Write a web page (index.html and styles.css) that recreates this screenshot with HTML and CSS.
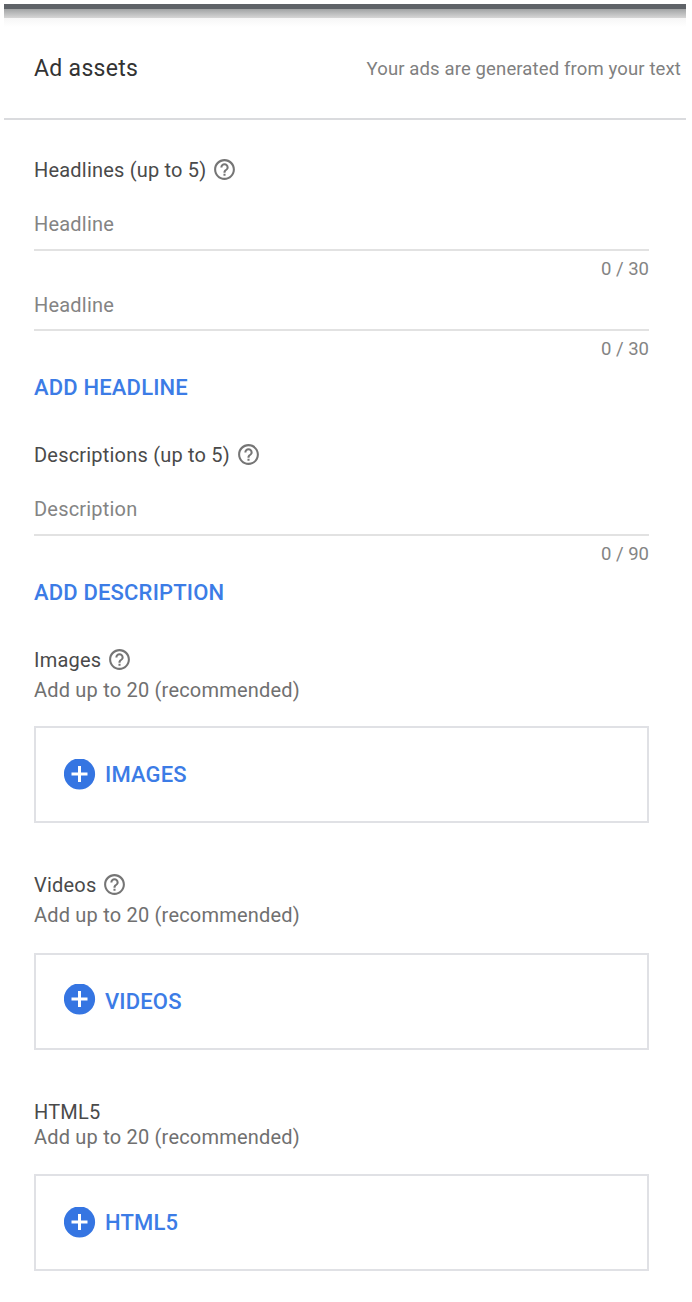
FILE: index.html
```html
<!DOCTYPE html>
<html lang="en">
<head>
    <meta charset="UTF-8">
    <meta name="viewport" content="width=device-width, initial-scale=1.0">
    <title>Ad assets</title>
    <link rel="stylesheet" href="styles.css">
</head>
<body>

    <svg class="defs" width="0" height="0">
        <symbol id="help" viewBox="0 0 24 24">
            <path d="M11 18h2v-2h-2v2zm1-16C6.48 2 2 6.48 2 12s4.480 10 10 10 10-4.480 10-10S17.520 2 12 2zm0 18c-4.410 0-8-3.590-8-8s3.590-8 8-8 8 3.590 8 8-3.590 8-8 8zm0-14c-2.210 0-4 1.790-4 4h2c0-1.100.9-2 2-2s2 .9 2 2c0 2-3 1.750-3 5h2c0-2.250 3-2.500 3-5 0-2.210-1.790-4-4-4z"/>
        </symbol>
        <symbol id="add" viewBox="0 0 32 32">
            <circle cx="15.500" cy="15" r="15.600" fill="#3575e2"/>
            <path d="M15.500 7v16M7.500 15h16" stroke="#fff" stroke-width="3"/>
        </symbol>
    </svg>

    <div class="panel">
        <div class="shadow"></div>
        <div class="header">
            <h1>Ad assets</h1>
            <span class="note">Your ads are generated from your text</span>
        </div>

        <div class="content">
            <div class="section">
                <h2>Headlines (up to 5) <svg class="help"><use href="#help"/></svg></h2>
                <div class="field">
                    <div class="field-input">Headline</div>
                    <div class="counter">0 / 30</div>
                </div>
                <div class="field second">
                    <div class="field-input">Headline</div>
                    <div class="counter">0 / 30</div>
                </div>
                <a class="add-link">ADD HEADLINE</a>
            </div>

            <div class="section">
                <h2>Descriptions (up to 5) <svg class="help"><use href="#help"/></svg></h2>
                <div class="field">
                    <div class="field-input">Description</div>
                    <div class="counter">0 / 90</div>
                </div>
                <a class="add-link">ADD DESCRIPTION</a>
            </div>

            <div class="section">
                <h2>Images <svg class="help"><use href="#help"/></svg></h2>
                <p class="hint">Add up to 20 (recommended)</p>
                <div class="upload">
                    <svg class="add"><use href="#add"/></svg>
                    <span>IMAGES</span>
                </div>
            </div>

            <div class="section videos">
                <h2>Videos <svg class="help"><use href="#help"/></svg></h2>
                <p class="hint">Add up to 20 (recommended)</p>
                <div class="upload">
                    <svg class="add"><use href="#add"/></svg>
                    <span>VIDEOS</span>
                </div>
            </div>

            <div class="section html5">
                <h2>HTML5</h2>
                <p class="hint">Add up to 20 (recommended)</p>
                <div class="upload">
                    <svg class="add"><use href="#add"/></svg>
                    <span>HTML5</span>
                </div>
            </div>
        </div>
    </div>

</body>
</html>
```

FILE: styles.css
```css
* {
  box-sizing: border-box;
}

body {
  margin: 0;
  background-color: #fff;
  font-family: Roboto, Arial, sans-serif;
  font-size: 20px;
  line-height: 30px;
  letter-spacing: 0.2px;
  color: #4a4a4a;
}

h1, h2, p {
  margin: 0;
  font-weight: 400;
}

.defs {
  display: block;
}

.panel {
  margin: 4px 6px 0 4px;
}

.shadow {
  height: 23px;
  background: linear-gradient(#5f6368 0, #5f6368 5px, #a2a4a5 5px, #d6d6d6 14px, #f6f6f6 14px, #fff 23px);
}

.header {
  display: flex;
  align-items: center;
  justify-content: space-between;
  height: 93px;
  padding: 0 5px 8px 30px;
  border-bottom: 2px solid #dadbde;
}

.header h1 {
  font-size: 23px;
  letter-spacing: 0.3px;
  color: #333;
}

.note {
  font-size: 18.5px;
  color: #808080;
  letter-spacing: 0.13px;
}

.content {
  padding: 35px 37px 0 30px;
}

.section {
  margin-bottom: 37px;
}

.section h2 {
  display: flex;
  align-items: center;
  gap: 6px;
  height: 30px;
  font-size: 20px;
}

.help {
  width: 25px;
  height: 25px;
  margin-bottom: 1px;
  fill: #757575;
}

.field {
  height: 80px;
  margin-top: 14px;
  color: #848484;
}

.field.second {
  margin-top: 0;
}

.field-input {
  height: 52px;
  border-bottom: 2px solid #e2e2e2;
  line-height: 51px;
}

.second .field-input {
  line-height: 52px;
}

.counter {
  text-align: right;
  font-size: 18.5px;
  letter-spacing: 0;
  line-height: 36px;
}

.add-link {
  display: block;
  margin-top: 14px;
  font-size: 22px;
  font-weight: 500;
  letter-spacing: 0.17px;
  color: #3c7ce6;
}

.hint {
  color: #707070;
}

.upload {
  display: flex;
  align-items: center;
  height: 97px;
  margin-top: 21px;
  padding-left: 28px;
  border: 2px solid #e0e1e5;
  font-size: 22px;
  font-weight: 500;
  letter-spacing: 0.15px;
  color: #3c7ce6;
}

.add {
  width: 32px;
  height: 32px;
  margin-right: 9px;
  overflow: visible;
}

.videos {
  margin-top: 47px;
}

.videos .upload {
  margin-top: 23px;
}

.videos .add {
  margin-bottom: 3px;
}

.html5 {
  margin-top: 50px;
}

.html5 h2,
.html5 .hint {
  height: 25px;
  line-height: 25px;
}

.html5 .upload {
  margin-top: 24px;
}
```
